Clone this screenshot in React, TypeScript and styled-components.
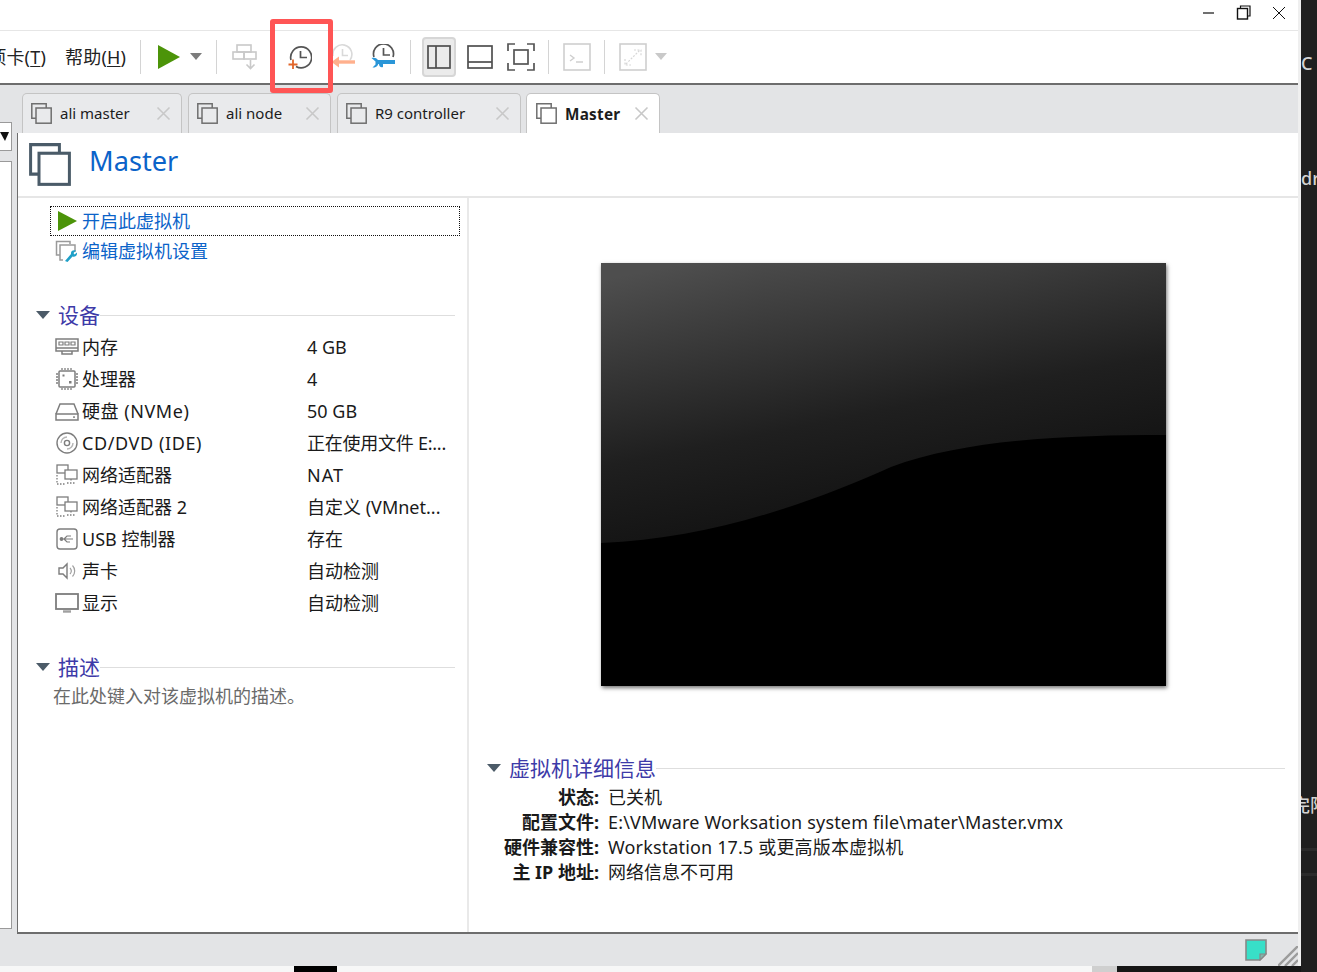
import React from "react";
import styled, { createGlobalStyle } from "styled-components";

const Global = createGlobalStyle`
  html, body { margin: 0; padding: 0; background: #1f1f1f; }
  #root { width: 1317px; height: 972px; overflow: hidden; }
  * { box-sizing: border-box; }
  body { font-family: "Noto Sans", "Noto Sans CJK SC", sans-serif; color: #1a1a1a; }
`;

const Screen = styled.div`
  position: relative; width: 1317px; height: 972px; display: flex; overflow: hidden; background: #1f1f1f;
`;
const Column = styled.div`
  width: 1301px; height: 972px; display: flex; flex-direction: column; flex: none;
`;
const Win = styled.div`
  height: 966px; display: flex; flex-direction: column; background: #e3e4e6; border-right: 3px solid #efefef;
`;
const TitleBar = styled.div`
  height: 31px; flex: none; background: #fff; border-bottom: 1px solid #e6e6e6; display: flex; justify-content: flex-end; align-items: center;
  padding-right: 10px; padding-bottom: 4px;
`;
const WinBtn = styled.svg`
  width: 16px; height: 16px; margin-right: 19px; flex: none;
  &:last-child { margin-right: 1px; }
`;
const Toolbar = styled.div`
  height: 54px; flex: none; background: #fff; border-bottom: 2px solid #6d6d6d; display: flex; align-items: center; overflow: hidden; padding-bottom: 1px;
`;
const Menu = styled.span<{ $ml: number }>`
  font-size: 18px; line-height: 26px; margin-left: ${(p) => p.$ml}px; white-space: nowrap; flex: none; color: #222; letter-spacing: 0.2px;
  u { text-underline-offset: 2px; }
`;
const Sep = styled.div<{ $ml: number }>`
  width: 1px; height: 34px; background: #d4d4d4; margin-left: ${(p) => p.$ml}px; flex: none;
`;
const Tool = styled.svg<{ $ml: number; $w: number; $h: number }>`
  width: ${(p) => p.$w}px; height: ${(p) => p.$h}px; margin-left: ${(p) => p.$ml}px; flex: none; display: block;
`;
const ActiveTool = styled.div<{ $ml: number }>`
  width: 34px; height: 40px; margin-left: ${(p) => p.$ml}px; flex: none; background: #ebebeb; border: 2px solid #d6d6d6; border-radius: 4px;
  display: flex; align-items: center; justify-content: center;
`;
const Body = styled.div`
  flex: 1; display: flex; min-height: 0;
`;
const Library = styled.div`
  width: 17px; flex: none; display: flex; flex-direction: column; padding-top: 37px;
`;
const LibCombo = styled.div`
  width: 12px; height: 29px; background: #fff; border: 1px solid #9a9a9a; border-left: 0; display: flex; align-items: center; justify-content: flex-end; padding-right: 2px;
`;
const LibTree = styled.div`
  width: 12px; height: 768px; margin-top: 10px; background: #fff; border: 1px solid #9a9a9a; border-left: 0;
`;
const Main = styled.div`
  flex: 1; min-width: 0; display: flex; flex-direction: column;
`;
const TabStrip = styled.div`
  height: 48px; flex: none; display: flex; align-items: flex-end; padding-left: 5px;
`;
const Tab = styled.div<{ $w: number; $ml: number; $active?: boolean }>`
  width: ${(p) => p.$w}px; height: 40px; margin-left: ${(p) => p.$ml}px; flex: none; display: flex; align-items: center;
  padding: 0 10px 0 ${(p) => (p.$active ? 9 : 8)}px;
  background: ${(p) => (p.$active ? "#fff" : "#e9eaec")};
  border: 1px solid #c4c4c4; border-bottom: 0; border-radius: 5px 5px 0 0;
`;
const TabLabel = styled.span<{ $active?: boolean }>`
  font-size: ${(p) => (p.$active ? 15.3 : 15)}px; line-height: 22px; margin-left: 8px; flex: 1; white-space: nowrap; color: #1c1c1c;
  font-weight: ${(p) => (p.$active ? 700 : 400)};
  letter-spacing: ${(p) => (p.$active ? "0.25px" : "0")};
  padding-bottom: ${(p) => (p.$active ? 0 : 1)}px;
`;
const TabIcon = styled.svg`
  width: 21px; height: 21px; flex: none;
`;
const TabClose = styled.svg`
  width: 15px; height: 15px; flex: none;
`;
const Pane = styled.div`
  height: 801px; flex: none; background: #fff; border-left: 1px solid #6d6d6d; border-bottom: 2px solid #6d6d6d; display: flex; flex-direction: column;
`;
const Header = styled.div`
  height: 65px; flex: none; border-bottom: 2px solid #e6e6e6; display: flex; align-items: flex-start; padding: 10px 0 0 11px;
`;
const HeaderIcon = styled.svg`
  width: 42px; height: 43px; flex: none;
`;
const Title = styled.h1`
  margin: 0 0 0 18px; font-size: 27.2px; line-height: 36px; font-weight: 400; color: #0b63c9;
`;
const Split = styled.div`
  flex: 1; display: flex; min-height: 0;
`;
const Left = styled.div`
  width: 451px; flex: none; border-right: 2px solid #e9e9e9; padding-top: 8px; display: flex; flex-direction: column;
`;
const Action = styled.div<{ $focus?: boolean }>`
  height: 30px; margin-left: 32px; width: 410px; display: flex; align-items: center; padding-left: 6px;
  border: 1px ${(p) => (p.$focus ? "dotted #111" : "solid transparent")};
`;
const ActionIcon = styled.svg<{ $shift?: number }>`
  width: 22px; height: 22px; flex: none; margin-left: ${(p) => -(p.$shift ?? 0)}px; margin-right: ${(p) => 3 + (p.$shift ?? 0)}px;
`;
const ActionText = styled.span`
  font-size: 18px; line-height: 24px; color: #0b63c9;
`;
const Section = styled.div<{ $mt: number; $ml: number; $mr: number }>`
  display: flex; align-items: center; height: 28px; margin-top: ${(p) => p.$mt}px; margin-left: ${(p) => p.$ml}px; margin-right: ${(p) => p.$mr}px;
`;
const SectionArrow = styled.svg`
  width: 14px; height: 8px; flex: none; margin-right: 8px;
`;
const SectionTitle = styled.span`
  font-size: 21px; line-height: 28px; color: #3d3aa8;
`;
const SectionLine = styled.div`
  flex: 1; height: 1px; background: #dedede; margin-top: 1px;
`;
const DeviceList = styled.div`
  margin-top: 2px; display: flex; flex-direction: column;
`;
const DeviceRow = styled.div`
  height: 32px; display: grid; grid-template-columns: 27px 225px 1fr; align-items: center; padding-left: 37px;
`;
const DeviceIcon = styled.svg`
  width: 24px; height: 24px;
`;
const Cell = styled.span<{ $track?: number }>`
  font-size: 18px; line-height: 24px; color: #1a1a1a; white-space: nowrap; letter-spacing: ${(p) => p.$track ?? 0}px;
`;
const Description = styled.div`
  margin: 3px 0 0 35px; font-size: 18px; line-height: 24px; color: #6a6a6a;
`;
const Right = styled.div`
  flex: 1; min-width: 0; display: flex; flex-direction: column;
`;
const Preview = styled.svg`
  width: 565px; height: 423px; margin: 65px 0 0 132px; display: block; flex: none; box-shadow: 1px 2px 4px rgba(0,0,0,.55);
`;
const DetailGrid = styled.div`
  margin-top: 2px; display: grid; grid-template-columns: 130px 1fr; column-gap: 9px; grid-auto-rows: 25px; align-items: center;
`;
const DetailKey = styled.span`
  font-size: 18px; line-height: 24px; font-weight: 700; text-align: right; color: #1a1a1a; white-space: nowrap;
`;
const Status = styled.div`
  flex: 1; display: flex; align-items: center; justify-content: flex-end; background: #e3e4e6; padding: 0; position: relative;
`;
const Note = styled.svg`
  width: 22px; height: 22px; margin-right: 31px; flex: none;
`;
const Grip = styled.svg`
  position: absolute; right: 0; bottom: 0; width: 20px; height: 20px;
`;
const Thumbs = styled.div`
  height: 6px; flex: none; display: flex;
`;
const ThumbCell = styled.div<{ $w: number; $c: string }>`
  width: ${(p) => p.$w}px; flex: none; background: ${(p) => p.$c};
`;
const Side = styled.div`
  flex: 1; min-width: 0; overflow: hidden; display: flex; flex-direction: column; color: #d4d4d4; font-size: 18px; line-height: 24px; font-weight: 500;
`;
const SideText = styled.div<{ $mt: number; $ml?: number }>`
  margin-top: ${(p) => p.$mt}px; white-space: nowrap; margin-left: ${(p) => p.$ml ?? 0}px;
`;
const SideRule = styled.div<{ $mt: number }>`
  height: 3px; background: #2b2b2b; margin-top: ${(p) => p.$mt}px; flex: none;
`;
const Highlight = styled.div`
  position: absolute; left: 270px; top: 19px; width: 63px; height: 74px; border: 5px solid #ff5555; border-radius: 3px; pointer-events: none;
`;

const VmGlyph = ({ c = "#6f6f6f" }: { c?: string }) => (
  <>
    <path d="M5 15.2H0.8V0.8H15.2V5" fill="none" stroke={c} strokeWidth="1.5" />
    <rect x="5" y="5" width="15.2" height="15.2" fill="none" stroke={c} strokeWidth="1.5" />
  </>
);
const Caret = ({ ml, c }: { ml: number; c: string }) => (
  <Tool $ml={ml} $w={12} $h={7} viewBox="0 0 12 7"><path d="M0 0H12L6 7Z" fill={c} /></Tool>
);

const tabs = [
  { name: "ali master", w: 160, ml: 0 },
  { name: "ali node", w: 143, ml: 6 },
  { name: "R9 controller", w: 184, ml: 6 },
  { name: "Master", w: 134, ml: 5, active: true },
];

const g = "#7d7d7d";
const netIcon = <g fill="none" stroke={g} strokeWidth="1.3"><rect x="2" y="2" width="11" height="8" fill="#fff" /><rect x="10" y="7" width="12" height="9" fill="#fff" /><path d="M16 16v3M12 20h8M2 12v9h8" strokeDasharray="1.5 1.5" /></g>;
const devices: { name: string; value: string; icon: React.ReactNode; nameTrack?: number; valueTrack?: number }[] = [
  { name: "内存", value: "4 GB", icon: <g fill="none" stroke={g} strokeWidth="1.5"><rect x="1" y="4" width="22" height="12" /><path d="M1 13H23M7 16v3H17V16" /><path d="M4 7h4v3H4zM10 7h4v3h-4zM16 7h4v3h-4z" strokeWidth="1.2" /></g> },
  { name: "处理器", value: "4", icon: <g fill="none" stroke={g} strokeWidth="1.3"><rect x="4" y="4" width="16" height="16" rx="1" strokeWidth="1.5" /><path d="M7 1v2M10 1v2M13 1v2M16 1v2M7 21v2M10 21v2M13 21v2M16 21v2M1 7h2M1 10h2M1 13h2M1 16h2M21 7h2M21 10h2M21 13h2M21 16h2" /><rect x="7.5" y="7.5" width="2" height="2" fill={g} stroke="none" /><rect x="14" y="14" width="2.5" height="2.5" fill={g} stroke="none" /></g> },
  { name: "硬盘 (NVMe)", value: "50 GB", nameTrack: 0.55, icon: <g fill="none" stroke={g} strokeWidth="1.5"><path d="M1 15L5 5H19L23 15" /><rect x="1" y="15" width="22" height="6" /><rect x="18" y="17.4" width="2" height="1.4" fill={g} stroke="none" /></g> },
  { name: "CD/DVD (IDE)", value: "正在使用文件 E:...", nameTrack: 0.6, valueTrack: -0.25, icon: <g fill="none" stroke={g} strokeWidth="1.4"><circle cx="12" cy="12" r="10" /><circle cx="12" cy="12" r="2.6" /><path d="M6 12a6 6 0 0 1 6-6M18 12a6 6 0 0 1-6 6" stroke="#b5b5b5" /></g> },
  { name: "网络适配器", value: "NAT", valueTrack: 1, icon: netIcon },
  { name: "网络适配器 2", value: "自定义 (VMnet...", icon: netIcon },
  { name: "USB 控制器", value: "存在", icon: <g fill="none" stroke={g} strokeWidth="1.4"><rect x="2" y="2" width="20" height="20" rx="3" /><path d="M6 12H18M9 12l3-3h4M9 12l3 3h3" strokeWidth="1.2" /><circle cx="6.5" cy="12" r="1.2" fill={g} /></g> },
  { name: "声卡", value: "自动检测", icon: <g fill="none" stroke={g} strokeWidth="1.4"><path d="M4 9H8L12 5V19L8 15H4Z" /><path d="M15 9a4.5 4.5 0 0 1 0 6M17.5 6.5a8 8 0 0 1 0 11" strokeWidth="1.2" stroke="#a0a0a0" /></g> },
  { name: "显示", value: "自动检测", icon: <g fill="none" stroke={g} strokeWidth="1.8"><rect x="1" y="3" width="22" height="15" /><path d="M8 20.5H16" strokeWidth="2.4" stroke="#a0a0a0" /></g> },
];

const details: [string, string, number][] = [
  ["状态:", "已关机", 0],
  ["配置文件:", "E:\\VMware Worksation system file\\mater\\Master.vmx", 0.17],
  ["硬件兼容性:", "Workstation 17.5 或更高版本虚拟机", 0.15],
  ["主 IP 地址:", "网络信息不可用", 0],
];

const Arrow = () => (
  <SectionArrow viewBox="0 0 14 8"><path d="M0 0H14L7 8Z" fill="#4c5b68" /></SectionArrow>
);

export default function App() {
  return (
    <Screen>
      <Global />
      <Column>
        <Win>
          <TitleBar>
            <WinBtn viewBox="0 0 16 16"><path d="M2 8H13" stroke="#111" strokeWidth="1.2" /></WinBtn>
            <WinBtn viewBox="0 0 16 16"><path d="M4.5 3V1H14V11H12" fill="none" stroke="#111" strokeWidth="1.2" /><rect x="1.5" y="3.5" width="10" height="10.5" fill="none" stroke="#111" strokeWidth="1.4" /></WinBtn>
            <WinBtn viewBox="0 0 16 16"><path d="M2 2L14 14M14 2L2 14" stroke="#111" strokeWidth="1" /></WinBtn>
          </TitleBar>
          <Toolbar>
            <Menu $ml={-30}>选项卡(<u>T</u>)</Menu>
            <Menu $ml={19}>帮助(<u>H</u>)</Menu>
            <Sep $ml={14} />
            <Tool $ml={16} $w={24} $h={26} viewBox="0 0 24 26"><path d="M1 1L23 13L1 25Z" fill="#4c9409" /></Tool>
            <Caret ml={9} c="#7c7c7c" />
            <Sep $ml={14} />
            <Tool $ml={15} $w={26} $h={26} viewBox="0 0 26 26">
              <g fill="none" stroke="#c9c9c9" strokeWidth="1.6"><rect x="5" y="1" width="14" height="7" /><rect x="1" y="8" width="11" height="7" /><rect x="12" y="8" width="12" height="7" /></g>
              <path d="M18.5 16V24M14.5 20.5L18.5 24.5L22.5 20.5" fill="none" stroke="#c9c9c9" strokeWidth="1.6" />
            </Tool>
            <Tool $ml={30} $w={24} $h={26} viewBox="0 0 24 26">
              <path d="M3 16A10.5 10.5 0 1 1 8 22.5" fill="none" stroke="#555" strokeWidth="1.7" />
              <path d="M12.5 7V13.5H19" fill="none" stroke="#555" strokeWidth="1.7" />
              <path d="M5 15.5V25M0.5 20.5H9.5" stroke="#e2662a" strokeWidth="1.8" />
            </Tool>
            <Tool $ml={19} $w={24} $h={26} viewBox="0 0 24 26">
              <path d="M2 12A9.5 9.5 0 1 1 19 16" fill="none" stroke="#d9d9d9" strokeWidth="1.6" />
              <path d="M11.5 5V11.5H17" fill="none" stroke="#d9d9d9" strokeWidth="1.6" />
              <path d="M24 18H6" stroke="#ffb08d" strokeWidth="3.4" />
              <path d="M8 12.5V23.5L0.5 18Z" fill="#ffb08d" />
            </Tool>
            <Tool $ml={16} $w={24} $h={26} viewBox="0 0 24 26">
              <path d="M3 13A10 10 0 1 1 22 13" fill="none" stroke="#555" strokeWidth="1.7" />
              <path d="M12.5 4V11H19" fill="none" stroke="#555" strokeWidth="1.7" />
              <path d="M6 18H24" stroke="#2a96d8" strokeWidth="4" />
              <path d="M0.5 14C4 13 7 14.5 7.5 17.5C8 21 5.5 24 1.5 23.5L4.5 20.5V17.5Z" fill="#2a96d8" />
              <path d="M8 20H12V23C9.5 24 8 22 8 20Z" fill="#2a96d8" />
            </Tool>
            <Sep $ml={15} />
            <ActiveTool $ml={11}>
              <Tool $ml={0} $w={24} $h={24} viewBox="0 0 24 24"><rect x="1" y="1" width="22" height="22" fill="none" stroke="#4f4f4f" strokeWidth="1.7" /><path d="M9 1V23" stroke="#4f4f4f" strokeWidth="1.7" /></Tool>
            </ActiveTool>
            <Tool $ml={11} $w={26} $h={24} viewBox="0 0 26 24"><rect x="1" y="1" width="24" height="22" fill="none" stroke="#4f4f4f" strokeWidth="1.7" /><path d="M1 17H25" stroke="#4f4f4f" strokeWidth="1.7" /></Tool>
            <Tool $ml={14} $w={28} $h={28} viewBox="0 0 28 28">
              <path d="M1 8V1H8M20 1H27V8M27 20V27H20M8 27H1V20" fill="none" stroke="#555" strokeWidth="1.7" />
              <rect x="7" y="7" width="14" height="14" fill="none" stroke="#555" strokeWidth="1.7" />
            </Tool>
            <Sep $ml={13} />
            <Tool $ml={14} $w={28} $h={28} viewBox="0 0 28 28">
              <rect x="1" y="1" width="26" height="26" fill="none" stroke="#cfcfcf" strokeWidth="1.6" />
              <path d="M7 12L11 15L7 18M13 19H20" fill="none" stroke="#cfcfcf" strokeWidth="1.4" />
            </Tool>
            <Sep $ml={13} />
            <Tool $ml={14} $w={28} $h={28} viewBox="0 0 28 28">
              <rect x="1" y="1" width="26" height="26" fill="none" stroke="#cfcfcf" strokeWidth="1.6" />
              <path d="M6 16V22H12M15 7H22V13M7 21L21 7" fill="none" stroke="#d7d7d7" strokeWidth="1.2" strokeDasharray="2 1.4" />
            </Tool>
            <Caret ml={8} c="#c9c9c9" />
          </Toolbar>
          <Body>
            <Library>
              <LibCombo>
                <svg width="9" height="9" viewBox="0 0 9 9"><path d="M0 0H9L5 9Z" fill="#111" /></svg>
              </LibCombo>
              <LibTree />
            </Library>
            <Main>
              <TabStrip>
                {tabs.map((t) => (
                  <Tab key={t.name} $w={t.w} $ml={t.ml} $active={t.active}>
                    <TabIcon viewBox="0 0 21 21"><VmGlyph /></TabIcon>
                    <TabLabel $active={t.active}>{t.name}</TabLabel>
                    <TabClose viewBox="0 0 15 15"><path d="M1.5 1.5L13.5 13.5M13.5 1.5L1.5 13.5" stroke="#c8c8c8" strokeWidth="1.6" /></TabClose>
                  </Tab>
                ))}
              </TabStrip>
              <Pane>
                <Header>
                  <HeaderIcon viewBox="0 0 21 21" preserveAspectRatio="none"><VmGlyph c="#4a5b68" /></HeaderIcon>
                  <Title>Master</Title>
                </Header>
                <Split>
                  <Left>
                    <Action $focus>
                      <ActionIcon viewBox="0 0 22 22"><path d="M1 1L20 11L1 21Z" fill="#4c9409" /></ActionIcon>
                      <ActionText>开启此虚拟机</ActionText>
                    </Action>
                    <Action>
                      <ActionIcon $shift={2} viewBox="0 0 22 22">
                        <path d="M5 15H1.5V1.5H15V4" fill="none" stroke="#9a9a9a" strokeWidth="1.5" />
                        <path d="M8 20H5V5H20V12" fill="none" stroke="#9a9a9a" strokeWidth="1.5" />
                        <path d="M10 21L16 14C15.5 11 18 9.5 21 10.5L18.5 13L19.5 14.5L22 12.5C22.5 15.5 20 17.5 17.5 16.5L12.5 22Z" fill="#1fa0c8" />
                      </ActionIcon>
                      <ActionText>编辑虚拟机设置</ActionText>
                    </Action>
                    <Section $mt={35} $ml={18} $mr={12}>
                      <Arrow />
                      <SectionTitle>设备</SectionTitle>
                      <SectionLine />
                    </Section>
                    <DeviceList>
                      {devices.map((d) => (
                        <DeviceRow key={d.name}>
                          <DeviceIcon viewBox="0 0 24 24">{d.icon}</DeviceIcon>
                          <Cell $track={d.nameTrack}>{d.name}</Cell>
                          <Cell $track={d.valueTrack}>{d.value}</Cell>
                        </DeviceRow>
                      ))}
                    </DeviceList>
                    <Section $mt={34} $ml={18} $mr={12}>
                      <Arrow />
                      <SectionTitle>描述</SectionTitle>
                      <SectionLine />
                    </Section>
                    <Description>在此处键入对该虚拟机的描述。</Description>
                  </Left>
                  <Right>
                    <Preview viewBox="0 0 565 423">
                      <defs>
                        <linearGradient id="sheen" x1="0.15" y1="0" x2="0.35" y2="0.75">
                          <stop offset="0" stopColor="#4e4e4e" />
                          <stop offset="0.55" stopColor="#1f1f1f" />
                          <stop offset="1" stopColor="#0c0c0c" />
                        </linearGradient>
                      </defs>
                      <rect width="565" height="423" fill="url(#sheen)" />
                      <path d="M0 280C110 276 215 238 290 204C365 176 470 172 565 172V423H0Z" fill="#000" />
                    </Preview>
                    <Section $mt={68} $ml={18} $mr={13}>
                      <Arrow />
                      <SectionTitle>虚拟机详细信息</SectionTitle>
                      <SectionLine />
                    </Section>
                    <DetailGrid>
                      {details.map(([k, v, track]) => (
                        <React.Fragment key={k}>
                          <DetailKey>{k}</DetailKey>
                          <Cell $track={track}>{v}</Cell>
                        </React.Fragment>
                      ))}
                    </DetailGrid>
                  </Right>
                </Split>
              </Pane>
              <Status>
                <Note viewBox="0 0 22 22">
                  <path d="M1 1H21V15L15 21H1Z" fill="#38dfc8" stroke="#888" strokeWidth="1.6" />
                  <path d="M15 21V15H21Z" fill="#7fb8ad" stroke="#888" strokeWidth="1.2" />
                </Note>
                <Grip viewBox="0 0 20 20">
                  <path d="M0 20L20 0M7 20L20 7M14 20L20 14" stroke="#9c9c9c" strokeWidth="2.4" />
                </Grip>
              </Status>
            </Main>
          </Body>
        </Win>
        <Thumbs>
          <ThumbCell $w={294} $c="#f7f7f7" />
          <ThumbCell $w={43} $c="#000" />
          <ThumbCell $w={755} $c="#f7f7f7" />
          <ThumbCell $w={25} $c="#cfcfcf" />
          <ThumbCell $w={184} $c="#161616" />
        </Thumbs>
      </Column>
      <Side>
        <SideText $mt={51}>C</SideText>
        <SideText $mt={91}>dr</SideText>
        <SideText $mt={603} $ml={-9}>完限</SideText>
        <SideRule $mt={31} />
        <SideRule $mt={22} />
      </Side>
      <Highlight />
    </Screen>
  );
}
